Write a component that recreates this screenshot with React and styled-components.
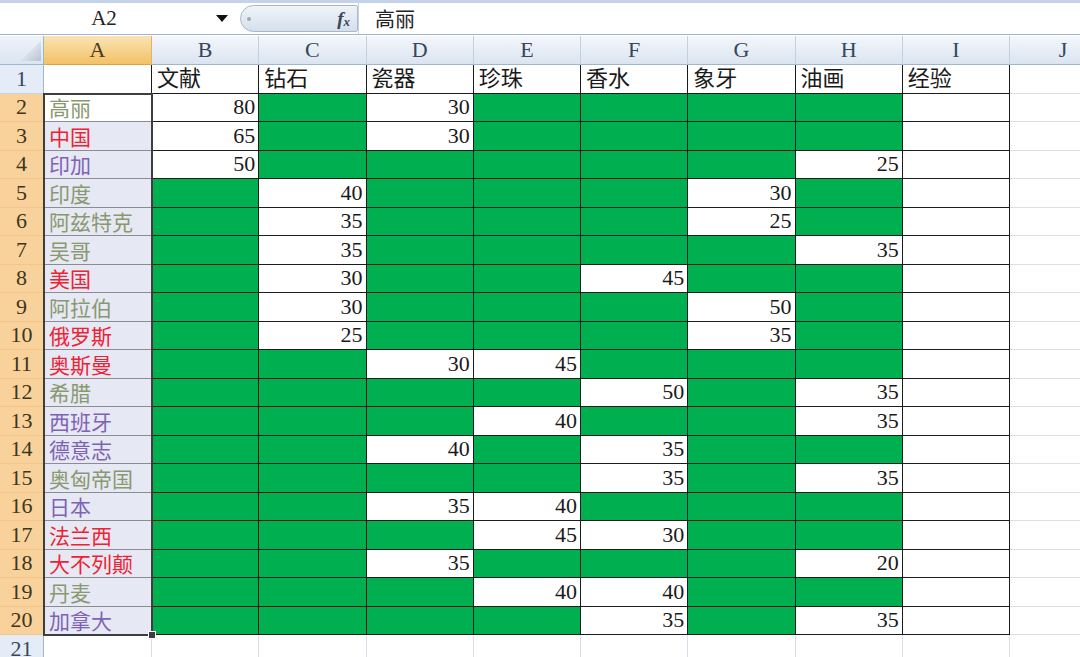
import styled, { createGlobalStyle } from "styled-components"

const GREEN = "#00B050"
const COLS = ["A", "B", "C", "D", "E", "F", "G", "H", "I", "J"]
const HEADS = ["文献", "钻石", "瓷器", "珍珠", "香水", "象牙", "油画", "经验"]
const TONES = { o: "#8A9870", r: "#EE2233", p: "#7F62B5" }

// name, tone, values for B..H (null = green fill)
const ROWS = [
    ["高丽", "o", [80, null, 30, null, null, null, null]],
    ["中国", "r", [65, null, 30, null, null, null, null]],
    ["印加", "p", [50, null, null, null, null, null, 25]],
    ["印度", "o", [null, 40, null, null, null, 30, null]],
    ["阿兹特克", "o", [null, 35, null, null, null, 25, null]],
    ["吴哥", "o", [null, 35, null, null, null, null, 35]],
    ["美国", "r", [null, 30, null, null, 45, null, null]],
    ["阿拉伯", "o", [null, 30, null, null, null, 50, null]],
    ["俄罗斯", "r", [null, 25, null, null, null, 35, null]],
    ["奥斯曼", "r", [null, null, 30, 45, null, null, null]],
    ["希腊", "o", [null, null, null, null, 50, null, 35]],
    ["西班牙", "p", [null, null, null, 40, null, null, 35]],
    ["德意志", "p", [null, null, 40, null, 35, null, null]],
    ["奥匈帝国", "o", [null, null, null, null, 35, null, 35]],
    ["日本", "p", [null, null, 35, 40, null, null, null]],
    ["法兰西", "r", [null, null, null, 45, 30, null, null]],
    ["大不列颠", "r", [null, null, 35, null, null, null, 20]],
    ["丹麦", "o", [null, null, null, 40, 40, null, null]],
    ["加拿大", "p", [null, null, null, null, 35, null, 35]],
]

export default function App() {
    return (
        <>
            <GlobalStyle />
            <Window>
                <FormulaBar>
                    <NameBox>
                        <NameText>A2</NameText>
                        <DropArrow />
                    </NameBox>
                    <FxPill>
                        <FxDot />
                        <FxLabel>f<sub>x</sub></FxLabel>
                    </FxPill>
                    <FormulaInput>高丽</FormulaInput>
                </FormulaBar>
                <Sheet>
                    <Corner>
                        <svg width="44" height="29" viewBox="0 0 44 29">
                            <defs>
                                <linearGradient id="tri" x1="0" y1="0" x2="1" y2="1">
                                    <stop offset="0" stopColor="#ffffff" />
                                    <stop offset="1" stopColor="#b4c3d6" />
                                </linearGradient>
                            </defs>
                            <polygon points="20,25 41,25 41,5" fill="url(#tri)" />
                        </svg>
                    </Corner>
                    {COLS.map(c => (
                        <ColHead key={c} $selected={c === "A"}>{c}</ColHead>
                    ))}

                    <RowHead>1</RowHead>
                    <Cell $dark>{""}</Cell>
                    {HEADS.map(h => (
                        <Cell key={h} $dark>{h}</Cell>
                    ))}
                    <Cell />

                    {ROWS.map(([name, tone, vals], i) => (
                        <Row key={name} name={name} tone={tone} vals={vals} index={i} />
                    ))}

                    <RowHead>21</RowHead>
                    {COLS.map(c => <Cell key={c} />)}

                    <Selection>
                        <FillHandle />
                    </Selection>
                </Sheet>
            </Window>
        </>
    )
}

function Row({ name, tone, vals, index }) {
    return (
        <>
            <RowHead $selected>{index + 2}</RowHead>
            <NameCell $color={TONES[tone]} $active={index === 0}>{name}</NameCell>
            {vals.map((v, j) => (
                <Cell key={j} $dark $green={v === null} $right>{v}</Cell>
            ))}
            <Cell $dark />
            <Cell />
        </>
    )
}

const GlobalStyle = createGlobalStyle`
    body{
        margin: 0;
        background: #fff;
        overflow: hidden;
    }
`

const Window = styled.div`
    width: 1080px;
    height: 657px;
    overflow: hidden;
    background: #fff;
    font-family: "Liberation Serif", "Noto Sans CJK SC", serif;
`

const FormulaBar = styled.div`
    box-sizing: border-box;
    height: 35px;
    display: flex;
    align-items: center;
    border-top: 3px solid #c3d4ea;
    border-bottom: 1px solid #9fb5d1;
    background: #fff;
    margin-bottom: 1px;
`

const NameBox = styled.div`
    width: 238px;
    height: 100%;
    display: flex;
    align-items: center;
`

const NameText = styled.div`
    width: 208px;
    text-align: center;
    font-size: 21px;
    color: #222;
`

const DropArrow = styled.div`
    margin-left: 8px;
    width: 0;
    height: 0;
    border-left: 6px solid transparent;
    border-right: 6px solid transparent;
    border-top: 7px solid #111;
`

const FxPill = styled.div`
    box-sizing: border-box;
    width: 118px;
    height: 27px;
    margin-left: 2px;
    border: 1px solid #a9b8cc;
    border-radius: 14px 2px 2px 14px;
    background: linear-gradient(#f0f4f9, #d5dfec);
    display: flex;
    align-items: center;
    justify-content: space-between;
    padding: 0 7px 0 6px;
`

const FxDot = styled.div`
    width: 4px;
    height: 4px;
    border-radius: 50%;
    background: #a0a8b2;
`

const FxLabel = styled.span`
    font-family: "Liberation Serif", serif;
    font-style: italic;
    font-weight: 700;
    font-size: 19px;
    color: #3c4654;

    sub{
        font-size: 13px;
        vertical-align: baseline;
        position: relative;
        top: 1px;
    }
`

const FormulaInput = styled.div`
    flex: 1;
    height: 100%;
    display: flex;
    align-items: center;
    padding-left: 16px;
    border-left: 1px solid #c9d5e4;
    font-family: "Noto Sans CJK SC", sans-serif;
    font-size: 20px;
    color: #222;
`

const Sheet = styled.div`
    display: grid;
    grid-template-columns: 44px 108px repeat(9, 107.25px);
    grid-template-rows: 29px;
    grid-auto-rows: 28.5px;
    position: relative;
`

const Corner = styled.div`
    box-sizing: border-box;
    background: linear-gradient(#eef3fa, #dbe5f1);
    border-right: 1px solid #9eb6ce;
    border-bottom: 1px solid #9eb6ce;
    svg{ display: block; }
`

const ColHead = styled.div`
    box-sizing: border-box;
    display: flex;
    align-items: center;
    justify-content: center;
    font-size: 22px;
    color: ${p => p.$selected ? "#4a3a1c" : "#36475c"};
    background: ${p => p.$selected
        ? "linear-gradient(#fae3b6, #f2c266)"
        : "linear-gradient(#f4f7fb, #dae4f0)"};
    border-right: 1px solid ${p => p.$selected ? "#e9b35a" : "#c2d0e2"};
    border-bottom: 1px solid ${p => p.$selected ? "#e99f3c" : "#9eb6ce"};
`

const RowHead = styled.div`
    box-sizing: border-box;
    display: flex;
    align-items: center;
    justify-content: center;
    font-size: 22px;
    color: ${p => p.$selected ? "#3f3520" : "#3a4656"};
    background: ${p => p.$selected ? "#f9d29b" : "#e4ecf7"};
    border-right: 1px solid ${p => p.$selected ? "#f0b865" : "#9eb6ce"};
    border-bottom: 1px solid ${p => p.$selected ? "#f3c58a" : "#c5d3e4"};
`

const Cell = styled.div`
    box-sizing: border-box;
    display: flex;
    align-items: flex-end;
    justify-content: ${p => p.$right ? "flex-end" : "flex-start"};
    padding: 0 3px 1px 5px;
    overflow: hidden;
    white-space: nowrap;
    background: ${p => p.$green ? GREEN : "#fff"};
    border-right: 1px solid ${p => p.$dark ? "#1c1c1c" : "#dadee6"};
    border-bottom: 1px solid ${p => p.$dark ? "#1c1c1c" : "#dadee6"};
    font-family: "Liberation Serif", "Noto Sans CJK SC", serif;
    font-size: 22px;
    line-height: 26px;
    color: #1a1a1a;
`

const NameCell = styled.div`
    box-sizing: border-box;
    display: flex;
    align-items: flex-end;
    padding: 0 3px 1px 5px;
    overflow: hidden;
    white-space: nowrap;
    background: ${p => p.$active ? "#fff" : "#e6e8f3"};
    border-bottom: 1px solid #8c8c92;
    font-family: "Noto Sans CJK SC", sans-serif;
    font-size: 21px;
    line-height: 26px;
    color: ${p => p.$color};
`

const Selection = styled.div`
    position: absolute;
    grid-column: 2 / 3;
    grid-row: 3 / 22;
    top: -1px;
    left: -1px;
    right: -1px;
    bottom: -1px;
    border: 2px solid #3e3e3e;
    pointer-events: none;
    z-index: 2;
`

const FillHandle = styled.div`
    position: absolute;
    right: -5px;
    bottom: -5px;
    width: 6px;
    height: 6px;
    background: #3e3e3e;
    border: 1px solid #fff;
`
